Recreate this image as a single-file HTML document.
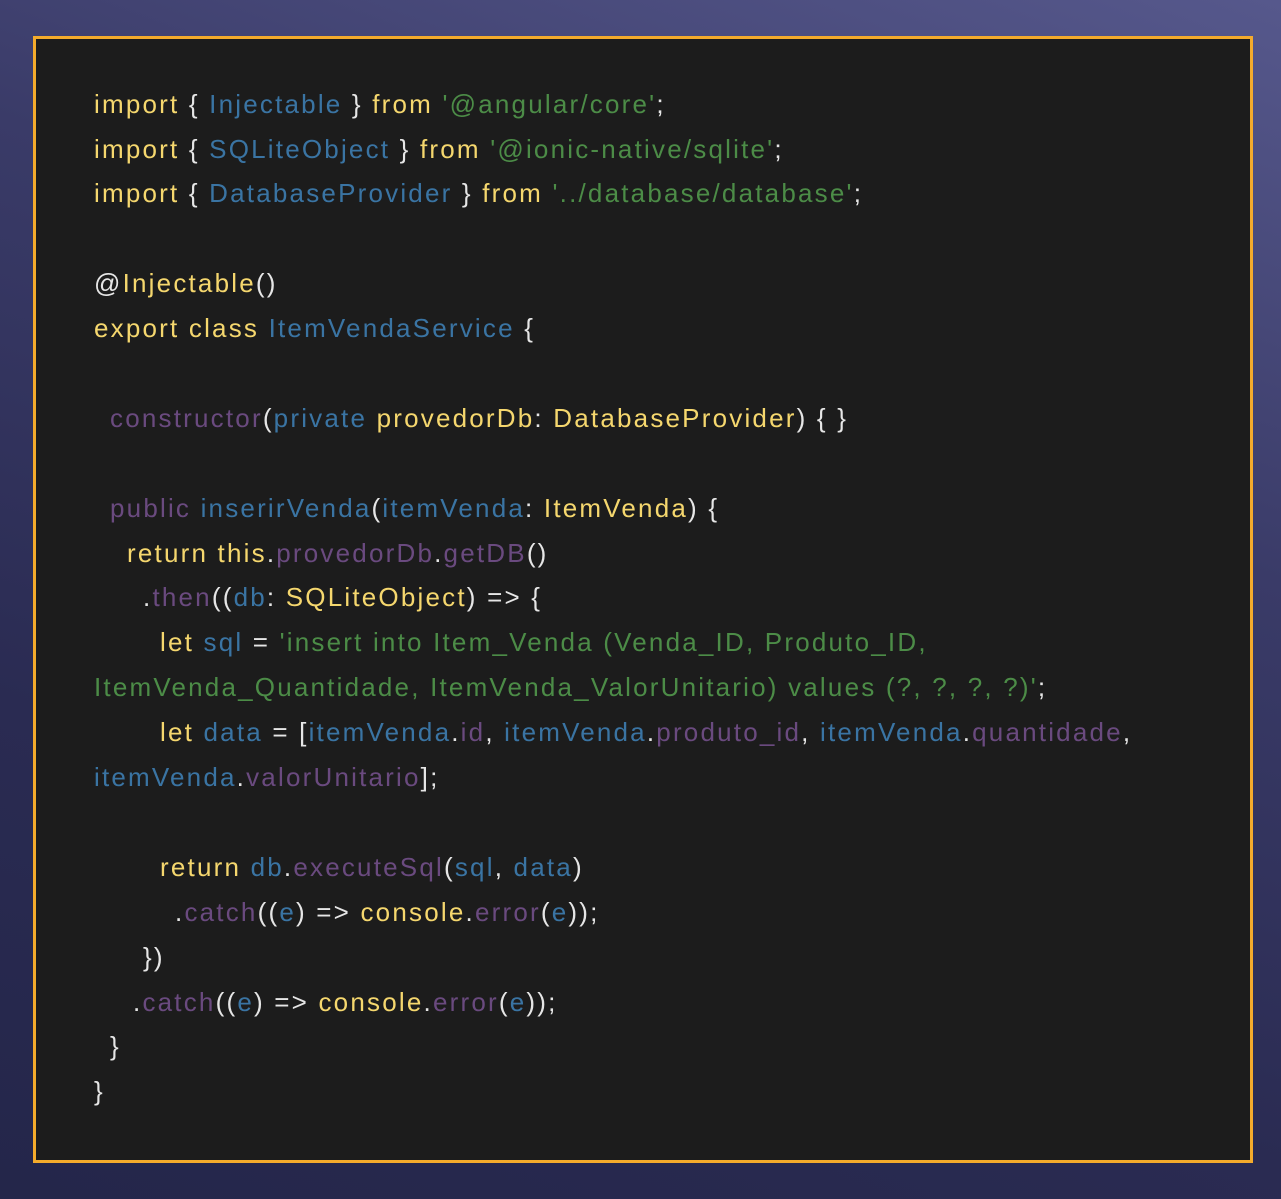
<!DOCTYPE html>
<html><head><meta charset="utf-8"><style>
html,body{margin:0;padding:0}
body{width:1281px;height:1199px;background:linear-gradient(200deg,#56588c 0%,#3a3b68 35%,#2a2b52 70%,#24264a 100%);position:relative;overflow:hidden}
.box{position:absolute;left:33px;top:36px;width:1214px;height:1121px;border:3px solid #f4ab2c;background:#1c1c1c}
.l{position:absolute;left:94px;font-family:"Liberation Sans",sans-serif;font-size:26px;letter-spacing:2.2px;color:#e6e6e6;white-space:pre;line-height:30px}
.y{color:#f5d76e}.b{color:#3a74a3}.g{color:#4c8c47}.p{color:#6a4a7f}
</style></head><body>
<div class="box"></div>
<div class="l" style="top:89px"><span class="y">import</span> { <span class="b">Injectable</span> } <span class="y">from</span> <span class="g">'@angular/core'</span>;</div>
<div class="l" style="top:134px"><span class="y">import</span> { <span class="b">SQLiteObject</span> } <span class="y">from</span> <span class="g">'@ionic-native/sqlite'</span>;</div>
<div class="l" style="top:178px"><span class="y">import</span> { <span class="b">DatabaseProvider</span> } <span class="y">from</span> <span class="g">'../database/database'</span>;</div>
<div class="l" style="top:268px">@<span class="y">Injectable</span>()</div>
<div class="l" style="top:313px"><span class="y">export class</span> <span class="b">ItemVendaService</span> {</div>
<div class="l" style="top:403px;left:110px"><span class="p">constructor</span>(<span class="b">private</span> <span class="y">provedorDb</span>: <span class="y">DatabaseProvider</span>) { }</div>
<div class="l" style="top:493px;left:110px"><span class="p">public</span> <span class="b">inserirVenda</span>(<span class="b">itemVenda</span>: <span class="y">ItemVenda</span>) {</div>
<div class="l" style="top:538px;left:127px"><span class="y">return this</span>.<span class="p">provedorDb</span>.<span class="p">getDB</span>()</div>
<div class="l" style="top:582px;left:143px">.<span class="p">then</span>((<span class="b">db</span>: <span class="y">SQLiteObject</span>) =&gt; {</div>
<div class="l" style="top:627px;left:160px"><span class="y">let</span> <span class="b">sql</span> = <span class="g">'insert into Item_Venda (Venda_ID, Produto_ID,</span></div>
<div class="l" style="top:672px"><span class="g">ItemVenda_Quantidade, ItemVenda_ValorUnitario) values (?, ?, ?, ?)'</span>;</div>
<div class="l" style="top:717px;left:160px"><span class="y">let</span> <span class="b">data</span> = [<span class="b">itemVenda</span>.<span class="p">id</span>, <span class="b">itemVenda</span>.<span class="p">produto_id</span>, <span class="b">itemVenda</span>.<span class="p">quantidade</span>,</div>
<div class="l" style="top:762px"><span class="b">itemVenda</span>.<span class="p">valorUnitario</span>];</div>
<div class="l" style="top:852px;left:160px"><span class="y">return</span> <span class="b">db</span>.<span class="p">executeSql</span>(<span class="b">sql</span>, <span class="b">data</span>)</div>
<div class="l" style="top:897px;left:175px">.<span class="p">catch</span>((<span class="b">e</span>) =&gt; <span class="y">console</span>.<span class="p">error</span>(<span class="b">e</span>));</div>
<div class="l" style="top:942px;left:143px">})</div>
<div class="l" style="top:987px;left:133px">.<span class="p">catch</span>((<span class="b">e</span>) =&gt; <span class="y">console</span>.<span class="p">error</span>(<span class="b">e</span>));</div>
<div class="l" style="top:1031px;left:110px">}</div>
<div class="l" style="top:1076px">}</div>
</body></html>
